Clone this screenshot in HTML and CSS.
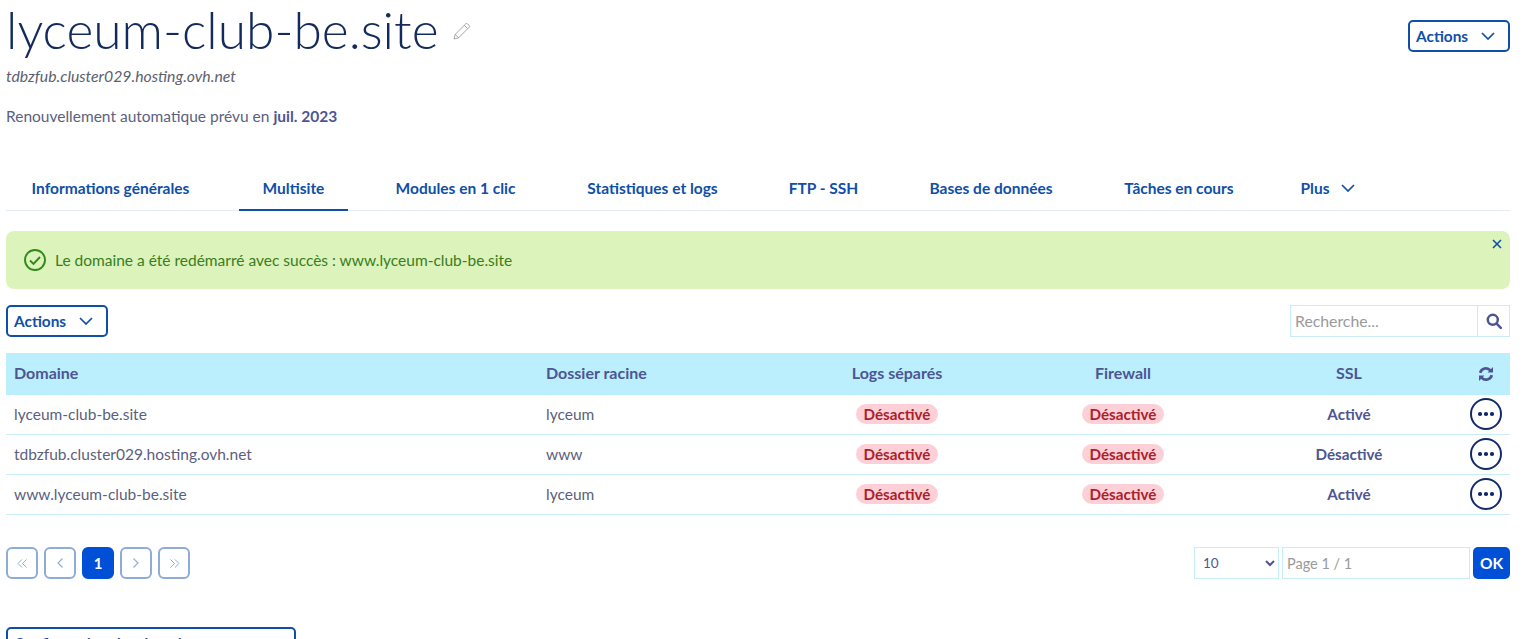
FILE: index.html
```html
<!DOCTYPE html>
<html lang="fr">
<head>
<meta charset="utf-8">
<title>lyceum-club-be.site</title>
<link rel="stylesheet" href="styles.css">
</head>
<body>
<header class="page-head">
  <div class="head-main">
    <h1 class="title">lyceum-club-be.site
      <svg class="pencil" width="18" height="18" viewBox="0 0 18 18" fill="none" stroke="#9a9a9a" stroke-width="0.9"><path d="M1 17l1.2-4.6L12.8 1.8a1.2 1.2 0 0 1 1.7 0l1.7 1.7a1.2 1.2 0 0 1 0 1.7L5.6 15.8z"/><path d="M2.2 12.4l3.4 3.4M11.3 3.3l3.4 3.4"/></svg>
    </h1>
    <p class="subtitle">tdbzfub.cluster029.hosting.ovh.net</p>
    <p class="renew">Renouvellement automatique prévu en <strong>juil. 2023</strong></p>
  </div>
  <button class="btn btn-actions">Actions
    <svg class="chev" width="14" height="8" viewBox="0 0 14 8" fill="none" stroke="currentColor" stroke-width="1.7"><path d="M1 1l6 6 6-6"/></svg>
  </button>
</header>

<nav class="tabs">
  <a class="tab t1">Informations générales</a>
  <a class="tab t2 active">Multisite</a>
  <a class="tab t3">Modules en 1 clic</a>
  <a class="tab t4">Statistiques et logs</a>
  <a class="tab t5">FTP - SSH</a>
  <a class="tab t6">Bases de données</a>
  <a class="tab t7">Tâches en cours</a>
  <a class="tab t8">Plus
    <svg class="chev" width="14" height="8" viewBox="0 0 14 8" fill="none" stroke="currentColor" stroke-width="1.7"><path d="M1 1l6 6 6-6"/></svg>
  </a>
</nav>

<div class="alert">
  <svg width="24" height="24" viewBox="0 0 24 24" fill="none" stroke="#2f8a18" stroke-width="1.9"><circle cx="12" cy="12" r="10"/><path d="M7 12.5l3.5 3.5L17 9"/></svg>
  <span>Le domaine a été redémarré avec succès : www.lyceum-club-be.site</span>
  <svg class="alert-close" width="10" height="10" viewBox="0 0 10 10" fill="none" stroke="#0f4fa8" stroke-width="1.6"><path d="M1 1l8 8M9 1L1 9"/></svg>
</div>

<div class="toolbar">
  <button class="btn btn-actions">Actions
    <svg class="chev" width="14" height="8" viewBox="0 0 14 8" fill="none" stroke="currentColor" stroke-width="1.7"><path d="M1 1l6 6 6-6"/></svg>
  </button>
  <div class="search">
    <input class="search-input" type="text" placeholder="Recherche...">
    <span class="search-btn">
      <svg width="16" height="16" viewBox="0 0 16 16" fill="none" stroke="#4d5693" stroke-width="2.5"><circle cx="6.8" cy="6.8" r="5"/><path d="M10.6 10.6l4.2 4.2" stroke-linecap="round"/></svg>
    </span>
  </div>
</div>

<table class="grid">
  <colgroup>
    <col class="c-domain"><col class="c-root"><col class="c-state"><col class="c-state"><col class="c-state"><col class="c-menu">
  </colgroup>
  <thead>
    <tr>
      <th>Domaine</th>
      <th>Dossier racine</th>
      <th class="ctr">Logs séparés</th>
      <th class="ctr">Firewall</th>
      <th class="ctr">SSL</th>
      <th class="ctr">
        <svg class="refresh" width="16" height="16" viewBox="0 0 16 16" fill="none" stroke="#4d5693" stroke-width="2.7"><path d="M2.2 6.8A5.9 5.9 0 0 1 12.4 4.4"/><path d="M13.8 9.2A5.9 5.9 0 0 1 3.6 11.6"/><path d="M15 1v5.4H9.6z" fill="#4d5693" stroke="none"/><path d="M1 15V9.6h5.4z" fill="#4d5693" stroke="none"/></svg>
      </th>
    </tr>
  </thead>
  <tbody>
    <tr>
      <td>lyceum-club-be.site</td><td>lyceum</td>
      <td class="ctr"><span class="pill">Désactivé</span></td>
      <td class="ctr"><span class="pill">Désactivé</span></td>
      <td class="ctr strong">Activé</td>
      <td class="ctr"><span class="more"><i></i><i></i><i></i></span></td>
    </tr>
    <tr>
      <td>tdbzfub.cluster029.hosting.ovh.net</td><td>www</td>
      <td class="ctr"><span class="pill">Désactivé</span></td>
      <td class="ctr"><span class="pill">Désactivé</span></td>
      <td class="ctr strong">Désactivé</td>
      <td class="ctr"><span class="more"><i></i><i></i><i></i></span></td>
    </tr>
    <tr>
      <td>www.lyceum-club-be.site</td><td>lyceum</td>
      <td class="ctr"><span class="pill">Désactivé</span></td>
      <td class="ctr"><span class="pill">Désactivé</span></td>
      <td class="ctr strong">Activé</td>
      <td class="ctr"><span class="more"><i></i><i></i><i></i></span></td>
    </tr>
  </tbody>
</table>

<div class="pager">
  <div class="pages">
    <span class="page"><svg width="11" height="9" viewBox="0 0 12 10" fill="none" stroke="currentColor" stroke-width="1.1"><path d="M5.5 .5L1 5l4.500 4.500M10.500 .5L6 5l4.500 4.500"/></svg></span>
    <span class="page"><svg width="6" height="10" viewBox="0 0 6 10" fill="none" stroke="currentColor" stroke-width="1.1"><path d="M5.500 .5L1 5l4.500 4.500"/></svg></span>
    <span class="page current">1</span>
    <span class="page"><svg width="6" height="10" viewBox="0 0 6 10" fill="none" stroke="currentColor" stroke-width="1.1"><path d="M.5 .5L5 5 .5 9.500"/></svg></span>
    <span class="page"><svg width="11" height="9" viewBox="0 0 12 10" fill="none" stroke="currentColor" stroke-width="1.1"><path d="M1.500 .5L6 5 1.500 9.500M6.500 .5L11 5 6.500 9.500"/></svg></span>
  </div>
  <div class="goto">
    <select class="size"><option>10</option></select>
    <input class="page-input" type="text" placeholder="Page 1 / 1">
    <span class="ok">OK</span>
  </div>
</div>

<button class="btn btn-config">Configuration des domaines en masse</button>
</body>
</html>
```

FILE: styles.css
```css
* { box-sizing: border-box; }
html, body { height: 639px; overflow: hidden; }
body {
  margin: 0;
  padding: 0 21px 0 6px;
  background: #fff;
  color: #4d5693;
  font-family: "Lato", "Noto Sans", sans-serif;
  font-size: 15.5px;
}
.page-head { display: flex; justify-content: space-between; align-items: flex-start; height: 127px; }
.title {
  margin: 0;
  height: 61px;
  font-size: 51.5px;
  line-height: 58px;
  font-weight: 300;
  color: #122a5c;
  white-space: nowrap;
}
.pencil { margin-left: 1px; vertical-align: 9px; }
.subtitle { margin: 6px 0 0; font-size: 15.8px; font-style: italic; color: #5b5f70; line-height: 18px; }
.renew { margin: 22px 0 0; line-height: 18px; color: #5b5f80; }
.renew strong { color: #4d5693; }
.btn {
  display: inline-flex;
  align-items: center;
  background: #fff;
  border: 2px solid #0f4fa8;
  border-radius: 5px;
  color: #0f4fa8;
  font: 700 15.4px "Lato", sans-serif;
  padding: 0 13px 0 6px;
  height: 32px;
}
.page-head .btn { margin-top: 20px; width: 102px; justify-content: space-between; }
.toolbar .btn { width: 102px; justify-content: space-between; }
.chev { flex: none; }
.tabs { display: flex; height: 84px; align-items: flex-end; border-bottom: 1px solid #e3eef2; }
.tab {
  display: flex;
  align-items: center;
  justify-content: center;
  gap: 12px;
  height: 40px;
  padding-bottom: 5px;
  color: #0f4fa8;
  font-weight: 700;
  white-space: nowrap;
  border-bottom: 2px solid transparent;
  margin-bottom: -1px;
}
.t1 { width: 209px; margin-right: 24px; }
.t2 { width: 109px; margin-right: 24px; }
.t3 { width: 167px; margin-right: 23px; }
.t4 { width: 181px; margin-right: 23px; }
.t5 { width: 115px; margin-right: 24px; }
.t6 { width: 172px; margin-right: 23px; }
.t7 { width: 158px; margin-right: 24px; }
.t8 { width: 92px; }
.tab.active { border-bottom-color: #0f4fa8; }
.alert {
  position: relative;
  display: flex;
  align-items: center;
  gap: 8px;
  margin-top: 20px;
  height: 58px;
  padding-left: 17px;
  background: #dcf3bb;
  border-radius: 8px;
  color: #3a7d1c;
}
.alert-close { position: absolute; top: 8px; right: 8px; }
.toolbar { display: flex; justify-content: space-between; align-items: center; margin-top: 16px; height: 32px; }
.search { display: flex; width: 220px; height: 32px; border: 1px solid #c9edf6; }
.search-input { flex: 1; min-width: 0; border: 0; padding: 0 4px 2px; font: 15.8px "Lato", sans-serif; outline: 0; }
.search-input::placeholder, .page-input::placeholder { color: #9a9a9a; opacity: 1; }
.search-btn { display: flex; align-items: center; justify-content: center; width: 32px; border-left: 1px solid #c9edf6; }
.grid { width: 100%; margin-top: 16px; border-collapse: separate; border-spacing: 0; table-layout: fixed; }
.c-domain { width: 532px; }
.c-root { width: 246px; }
.c-state { width: 226px; }
.c-menu { width: 48px; }
.grid th {
  height: 42px;
  padding: 0 8px 3px;
  background: #bbeffe;
  color: #4d5693;
  font-size: 16px;
  font-weight: 700;
  text-align: left;
}
.grid td { height: 40px; padding: 0 8px 1px; border-bottom: 1px solid #c9edf6; color: #5b5f80; }
.grid th.ctr, .grid td.ctr { text-align: center; }
.grid td.strong { font-size: 15.2px; font-weight: 700; color: #4d5693; }
.grid td:last-child { padding: 0 0 1px; }
.grid th:last-child { padding: 0 0 3px; }
.refresh { vertical-align: middle; }
.pill {
  display: inline-block;
  padding: 0 8px;
  height: 20px;
  line-height: 20px;
  border-radius: 10px;
  background: #fdd0d8;
  color: #ab1f2c;
  font-size: 15.2px;
  font-weight: 700;
}
.more {
  display: inline-flex;
  align-items: center;
  justify-content: center;
  gap: 2.5px;
  width: 32px;
  height: 32px;
  vertical-align: middle;
  border: 2px solid #122a6c;
  border-radius: 50%;
}
.more i { display: block; width: 3.5px; height: 3.5px; border-radius: 50%; background: #122a6c; }
.pager { display: flex; justify-content: space-between; margin-top: 32px; height: 32px; }
.pages { display: flex; gap: 6px; }
.page {
  display: flex;
  align-items: center;
  justify-content: center;
  width: 32px;
  height: 32px;
  border: 2px solid #8eacd6;
  border-radius: 6px;
  color: #8eacd6;
}
.page.current { background: #0050d7; border-color: #0050d7; color: #fff; font-weight: 700; font-size: 15px; }
.goto { display: flex; gap: 3px; }
.size {
  width: 85px;
  height: 32px;
  padding: 0 0 0 4px;
  background: #fff;
  border: 1px solid #c9edf6;
  border-radius: 0;
  color: #4d5693;
  font: 13.5px "Lato", sans-serif;
}
.page-input { width: 188px; height: 32px; padding: 0 4px; border: 1px solid #c9edf6; font: 14.5px "Lato", sans-serif; }
.ok {
  display: flex;
  align-items: center;
  justify-content: center;
  width: 37px;
  height: 32px;
  background: #0050d7;
  border-radius: 5px;
  color: #fff;
  font-weight: 700;
}
.btn-config { align-items: flex-start; margin-top: 48px; width: 290px; padding: 5px 6px 0; }
```
